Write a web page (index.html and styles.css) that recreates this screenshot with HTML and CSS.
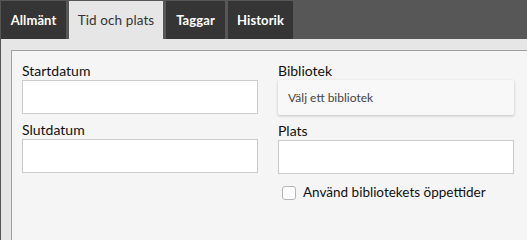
FILE: index.html
```html
<!DOCTYPE html>
<html lang="sv">
<head>
<meta charset="utf-8">
<title>Tid och plats</title>
<link rel="stylesheet" href="styles.css">
</head>
<body>
<div class="page">
  <nav class="tabbar">
    <a class="tab tab-general">Allmänt</a>
    <a class="tab tab-time active">Tid och plats</a>
    <a class="tab tab-tags">Taggar</a>
    <a class="tab tab-history">Historik</a>
  </nav>
  <div class="content">
    <div class="panel">
      <div class="col">
        <div class="field">
          <label class="label">Startdatum</label>
          <div class="input"></div>
        </div>
        <div class="field">
          <label class="label">Slutdatum</label>
          <div class="input"></div>
        </div>
      </div>
      <div class="col">
        <div class="field">
          <label class="label">Bibliotek</label>
          <div class="select">Välj ett bibliotek</div>
        </div>
        <div class="field">
          <label class="label">Plats</label>
          <div class="input"></div>
        </div>
        <div class="check-row">
          <span class="checkbox"></span>
          <span class="check-label">Använd bibliotekets öppettider</span>
        </div>
      </div>
    </div>
  </div>
</div>
</body>
</html>
```

FILE: styles.css
```css
html, body {
  margin: 0;
  padding: 0;
  height: 100%;
}
body {
  background: #e6e6e6;
  font-family: "Lato", "DejaVu Sans", sans-serif;
  color: #1a1a1a;
  overflow: hidden;
}
.page {
  border-left: 1px solid #555;
  min-height: 100vh;
  box-sizing: border-box;
  display: flex;
  flex-direction: column;
}
.tabbar {
  display: flex;
  gap: 3px;
  height: 38px;
  padding-top: 1px;
  background: #575757;
  flex: none;
}
.tab {
  display: flex;
  align-items: center;
  justify-content: center;
  background: #353535;
  color: #fff;
  font-weight: 700;
  font-size: 13px;
  letter-spacing: 0.1px;
}
.tab-general { width: 65px; }
.tab-time { width: 94px; }
.tab-tags { width: 59px; }
.tab-history { width: 65px; }
.tab.active {
  background: #e6e6e6;
  color: #333;
  font-weight: 400;
  font-size: 13.5px;
}
.content {
  flex: 1;
  padding: 11px 0 0 10px;
  display: flex;
}
.panel {
  flex: 1;
  background: #f5f5f5;
  border-top: 1px solid #a0a0a0;
  border-left: 1px solid #a0a0a0;
  padding: 10px 0 0 10px;
  display: grid;
  grid-template-columns: 236px 236px;
  column-gap: 20px;
  align-content: start;
}
.field {
  display: flex;
  flex-direction: column;
  margin-bottom: 6px;
}
.label {
  font-size: 14px;
  line-height: 19px;
  color: #111;
}
.input {
  height: 32px;
  background: #fff;
  border: 1px solid #ccc;
}
.select {
  height: 35px;
  box-sizing: border-box;
  display: flex;
  align-items: center;
  padding-left: 10px;
  background: #f8f8f8;
  border-radius: 2px;
  box-shadow: 0 1px 3px rgba(0, 0, 0, 0.22);
  font-size: 12px;
  color: #444;
}
.check-row {
  display: flex;
  align-items: center;
  gap: 7px;
  margin-top: 9px;
  padding-left: 4px;
}
.checkbox {
  width: 12px;
  height: 12px;
  border: 1px solid #b5b5b5;
  border-radius: 3px;
  background: #fff;
}
.check-label {
  font-size: 13.5px;
  line-height: 19px;
  color: #111;
}
```
